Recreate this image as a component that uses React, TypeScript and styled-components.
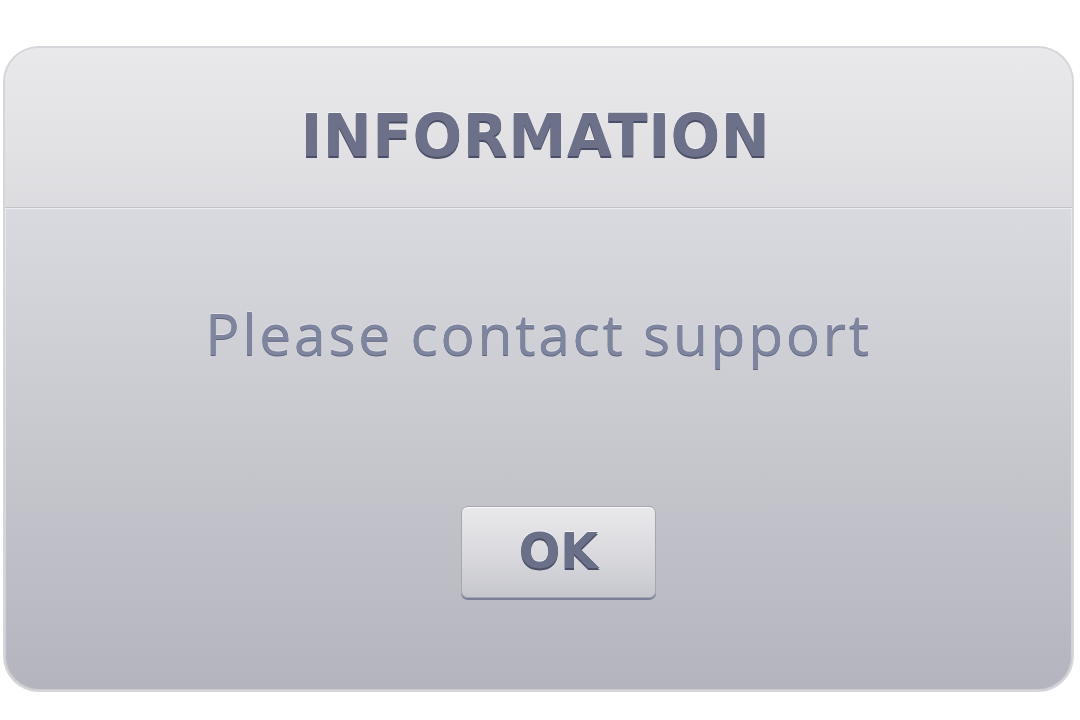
import React from "react";
import styled, { createGlobalStyle } from "styled-components";

const Global = createGlobalStyle`
  html, body { margin: 0; padding: 0; background: #ffffff; }
  #root { width: 1080px; height: 720px; }
`;

const Page = styled.div`
  width: 1080px;
  height: 720px;
  box-sizing: border-box;
  padding: 46px 6px 28px 3px;
  display: flex;
`;

const Dialog = styled.div`
  flex: 1;
  display: flex;
  flex-direction: column;
  border-radius: 36px;
  border: 2px solid #d6d6da;
  overflow: hidden;
  background: linear-gradient(180deg, #dededf 0%, #d9dadf 25%, #c8c9cf 60%, #b3b4bd 100%);
  box-shadow: inset 0 0 0 1px rgba(255,255,255,0.35);
`;

const Header = styled.div`
  height: 159px;
  display: flex;
  align-items: center;
  justify-content: center;
  background: linear-gradient(180deg, #e9e9eb 0%, #e2e2e5 60%, #dcdce0 100%);
  border-bottom: 1px solid #c2c3c9;
  box-shadow: 0 1px 0 #ecedf0;
`;

const Title = styled.h1`
  margin: 0;
  padding: 16px 6px 0 0;
  font-family: "DejaVu Sans", Verdana, sans-serif;
  font-weight: bold;
  font-size: 58px;
  letter-spacing: 0.8px;
  color: #6c7189;
  text-shadow: 0 1.5px 0 #4a4e66, 0 -1px 0 rgba(255,255,255,0.6);
`;

const Body = styled.div`
  flex: 1;
  display: flex;
  flex-direction: column;
  align-items: center;
  margin-top: 1px;
`;

const Message = styled.p`
  margin: 96px 0 0;
  font-family: "Open Sans", "Segoe UI", sans-serif;
  font-weight: 400;
  font-size: 57px;
  letter-spacing: 2.7px;
  line-height: 1;
  color: #7e859e;
  text-shadow: 0 1px 0 #5f647c, 0 -1px 0 rgba(255,255,255,0.35);
`;

const OkButton = styled.button`
  margin: 144px 0 0 40px;
  width: 195px;
  height: 92px;
  box-sizing: border-box;
  border-radius: 7px;
  border: 1px solid #a4a6b0;
  background: linear-gradient(180deg, #e9e9ec 0%, #dcdce0 45%, #c6c7cd 100%);
  box-shadow: 0 2px 0 #7b8098, inset 0 1px 0 rgba(255,255,255,0.8);
  display: flex;
  align-items: center;
  justify-content: center;
  padding: 0 0 2px;
  font-family: "DejaVu Sans", Verdana, sans-serif;
  font-weight: bold;
  font-size: 49px;
  color: #6b7089;
  text-shadow: 0 1.5px 0 #4a4e66, 0 -1px 0 rgba(255,255,255,0.6);
  cursor: pointer;
`;

export default function App() {
  return (
    <>
      <Global />
      <Page>
        <Dialog>
          <Header>
            <Title>INFORMATION</Title>
          </Header>
          <Body>
            <Message>Please contact support</Message>
            <OkButton>OK</OkButton>
          </Body>
        </Dialog>
      </Page>
    </>
  );
}
